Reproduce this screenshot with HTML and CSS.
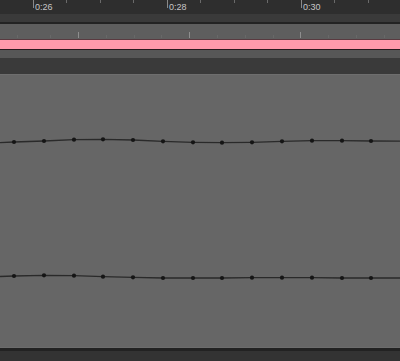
FILE: index.html
```html
<!DOCTYPE html>
<html>
<head>
<meta charset="utf-8">
<link rel="stylesheet" href="styles.css">
</head>
<body>
<div class="editor">
  <div class="ruler">
    <div class="ruler-ticks">
      <span class="mark major" style="left:33px"><span class="label">0:26</span></span>
      <span class="mark" style="left:66px"></span>
      <span class="mark" style="left:100px"></span>
      <span class="mark" style="left:133px"></span>
      <span class="mark major" style="left:167px"><span class="label">0:28</span></span>
      <span class="mark" style="left:200px"></span>
      <span class="mark" style="left:234px"></span>
      <span class="mark" style="left:267px"></span>
      <span class="mark major" style="left:301px"><span class="label">0:30</span></span>
      <span class="mark" style="left:334px"></span>
      <span class="mark" style="left:368px"></span>
    </div>
  </div>
  <div class="ruler-foot"></div>
  <div class="divider"></div>
  <div class="region-strip">
    <div class="strip-ticks">
      <span class="stick" style="left:17px"></span>
      <span class="stick" style="left:50px"></span>
      <span class="stick bright" style="left:78px"></span>
      <span class="stick" style="left:106px"></span>
      <span class="stick" style="left:134px"></span>
      <span class="stick" style="left:161px"></span>
      <span class="stick bright" style="left:189px"></span>
      <span class="stick" style="left:217px"></span>
      <span class="stick" style="left:245px"></span>
      <span class="stick" style="left:273px"></span>
      <span class="stick bright" style="left:300px"></span>
      <span class="stick" style="left:328px"></span>
      <span class="stick" style="left:356px"></span>
      <span class="stick" style="left:384px"></span>
    </div>
  </div>
  <div class="region-bar"></div>
  <div class="region-under"></div>
  <div class="header-dark"></div>
  <div class="lane">
    <svg class="env" width="400" height="272" viewBox="0 75 400 272">
      <polyline class="env-line" points="0,142.6 14,142 44,141 74,139.7 103,139.3 133,140 163,141.3 193,142.3 222,142.7 252,142.3 282,141.3 312,140.7 342,140.7 371,141 400,141.2"/>
      <g class="env-dots">
        <circle cx="14" cy="142" r="2.1"/><circle cx="44" cy="141" r="2.1"/><circle cx="74" cy="139.7" r="2.1"/>
        <circle cx="103" cy="139.3" r="2.1"/><circle cx="133" cy="140" r="2.1"/><circle cx="163" cy="141.3" r="2.1"/>
        <circle cx="193" cy="142.3" r="2.1"/><circle cx="222" cy="142.7" r="2.1"/><circle cx="252" cy="142.3" r="2.1"/>
        <circle cx="282" cy="141.3" r="2.1"/><circle cx="312" cy="140.7" r="2.1"/><circle cx="342" cy="140.7" r="2.1"/>
        <circle cx="371" cy="141" r="2.1"/>
      </g>
      <polyline class="env-line" points="0,276.5 14,276 44,275.3 74,275.7 103,276.7 133,277.3 163,278 193,278 222,278 252,277.7 282,277.7 312,277.7 342,278 371,278 400,278"/>
      <g class="env-dots">
        <circle cx="14" cy="276" r="2.1"/><circle cx="44" cy="275.3" r="2.1"/><circle cx="74" cy="275.7" r="2.1"/>
        <circle cx="103" cy="276.7" r="2.1"/><circle cx="133" cy="277.3" r="2.1"/><circle cx="163" cy="278" r="2.1"/>
        <circle cx="193" cy="278" r="2.1"/><circle cx="222" cy="278" r="2.1"/><circle cx="252" cy="277.7" r="2.1"/>
        <circle cx="282" cy="277.7" r="2.1"/><circle cx="312" cy="277.7" r="2.1"/><circle cx="342" cy="278" r="2.1"/>
        <circle cx="371" cy="278" r="2.1"/>
      </g>
    </svg>
  </div>
  <div class="footer-line"></div>
  <div class="footer"></div>
</div>
</body>
</html>
```
FILE: styles.css
```css
html, body {
  margin: 0;
  padding: 0;
  background: #333333;
}
.editor {
  width: 400px;
  height: 361px;
  display: flex;
  flex-direction: column;
  overflow: hidden;
  font-family: "Liberation Sans", Arial, sans-serif;
}
.ruler {
  height: 14px;
  background: #2e2e2e;
  position: relative;
}
.ruler-ticks {
  position: relative;
  height: 100%;
}
.mark {
  position: absolute;
  top: 0;
  width: 1px;
  height: 3px;
  background: #6a6a6a;
}
.mark.major {
  height: 8px;
  background: #8a8a8a;
}
.label {
  position: absolute;
  left: 2px;
  top: 2px;
  font-size: 9px;
  line-height: 10px;
  color: #c6c6c6;
  white-space: nowrap;
}
.ruler-foot {
  height: 8px;
  background: #3a3a3a;
}
.divider {
  height: 2px;
  background: #232323;
}
.region-strip {
  height: 15px;
  background: #5e5e5e;
  position: relative;
}
.stick {
  position: absolute;
  bottom: 1px;
  width: 1px;
  height: 3px;
  background: #686868;
}
.stick.bright {
  height: 6px;
  background: #8e8e8e;
}
.region-bar {
  background: #ff9aab;
  border-top: 1px solid #5a3a40;
  border-bottom: 1px solid #2a1a1d;
  box-sizing: border-box;
  height: 11px;
}
.region-under {
  height: 8px;
  background: #575757;
}
.header-dark {
  height: 16px;
  background: #3a3a3a;
}
.lane {
  height: 273px;
  flex: none;
  background: #666666;
  border-top: 1px solid #6e6e6e;
  box-sizing: border-box;
  position: relative;
}
.env {
  position: absolute;
  left: 0;
  top: 0;
  display: block;
}
.env-line {
  fill: none;
  stroke: #2a2a2a;
  stroke-width: 1.3;
}
.env-dots circle {
  fill: #151515;
}
.footer-line {
  height: 1px;
  background: #6c6c6c;
}
.footer {
  flex: 1;
  background: #333333;
  border-top: 3px solid #222222;
}
```
